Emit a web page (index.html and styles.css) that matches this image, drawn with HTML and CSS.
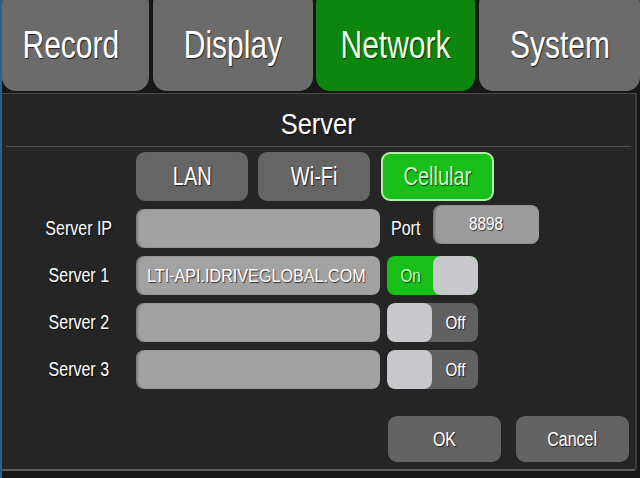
FILE: index.html
```html
<!DOCTYPE html>
<html lang="en">
<head>
  <meta charset="UTF-8" />
  <title>Network - Server</title>
  <link rel="stylesheet" href="styles.css">
</head>
<body>
  <div class="screen">
    <nav class="tabs">
      <div class="tab tab-record"><span class="c">Record</span></div>
      <div class="tab tab-display"><span class="c">Display</span></div>
      <div class="tab tab-network active"><span class="c">Network</span></div>
      <div class="tab tab-system"><span class="c">System</span></div>
    </nav>

    <section class="panel">
      <h1 class="title"><span class="c">Server</span></h1>

      <div class="modes">
        <button class="btn"><span class="c">LAN</span></button>
        <button class="btn"><span class="c">Wi-Fi</span></button>
        <button class="btn selected"><span class="c">Cellular</span></button>
      </div>

      <div class="row">
        <label class="label"><span class="c">Server IP</span></label>
        <div class="field"></div>
        <label class="port-label"><span class="c">Port</span></label>
        <div class="field port"><span class="c">8898</span></div>
      </div>

      <div class="row">
        <label class="label"><span class="c">Server 1</span></label>
        <div class="field"><span class="c">LTI-API.IDRIVEGLOBAL.COM</span></div>
        <div class="toggle on"><span class="state"><span class="c">On</span></span><span class="knob"></span></div>
      </div>

      <div class="row">
        <label class="label"><span class="c">Server 2</span></label>
        <div class="field"></div>
        <div class="toggle"><span class="knob"></span><span class="state"><span class="c">Off</span></span></div>
      </div>

      <div class="row">
        <label class="label"><span class="c">Server 3</span></label>
        <div class="field"></div>
        <div class="toggle"><span class="knob"></span><span class="state"><span class="c">Off</span></span></div>
      </div>

      <div class="actions">
        <button class="btn wide"><span class="c">OK</span></button>
        <button class="btn wide"><span class="c">Cancel</span></button>
      </div>
    </section>
  </div>
</body>
</html>
```

FILE: styles.css
```css
:root {
  --bg: #171717;
  --panel: #252525;
  --tab: #6b6b6b;
  --green: #0c860c;
  --bright: #18bf18;
  --field: #a2a2a2;
  --knob: #c8c8cc;
  --track: #616161;
}

body {
  margin: 0;
  background: var(--bg);
  font-family: 'Liberation Sans', Arial, sans-serif;
  color: #fff;
}

.screen {
  width: 638px;
  height: 478px;
  border-left: 2px solid #2b5f8e;
  overflow: hidden;
}

/* condensed text */
.c {
  display: inline-block;
  transform: scaleX(0.8);
  white-space: nowrap;
  text-shadow: 1px 1px 1px rgba(0, 0, 0, 0.7);
}

.tabs {
  display: flex;
  height: 101px;
  margin-top: -10px;
}

.tab {
  display: flex;
  align-items: center;
  justify-content: center;
  background: var(--tab);
  border-radius: 14px;
  font-size: 39px;
  padding-top: 8px;
  box-sizing: border-box;
}

.tab .c { transform: scaleX(0.77); }

.tab-record { width: 148px; padding-right: 10px; }
.tab-display { width: 161px; margin-left: 4px; }
.tab-network { width: 160px; margin-left: 3px; }
.tab-system { width: 162px; margin-left: 4px; }

.tab.active {
  background: var(--green);
  color: #eaffe4;
}

.panel {
  width: 635px;
  height: 378px;
  box-sizing: border-box;
  margin-top: 2px;
  background: var(--panel);
  border-top: 1px solid #4a4a4a;
  border-right: 2px solid #3c3c3c;
  border-bottom: 2px solid #5c5c5c;
  border-radius: 0 0 4px 0;
}

.title {
  margin: 0 4px 0 4px;
  height: 53px;
  box-sizing: border-box;
  padding-top: 15px;
  font-size: 30px;
  font-weight: normal;
  line-height: 30px;
  text-align: center;
  border-bottom: 1px solid #4f4f4f;
}

.title .c { transform: scaleX(0.85); }

.btn {
  font-family: inherit;
  color: #fff;
  border: none;
  background: #656565;
  border-radius: 9px;
  padding: 0;
  cursor: pointer;
}

.modes {
  display: flex;
  gap: 10px;
  margin: 5px 0 0 134px;
}

.modes .btn {
  width: 112px;
  height: 49px;
  font-size: 25px;
}

.modes .btn.selected {
  width: 113px;
  margin-left: 1px;
  background: var(--bright);
  border: 2px solid #b4ecae;
  color: #ccffc4;
}

.row {
  display: flex;
  align-items: center;
  height: 39px;
  margin-top: 8px;
}

.label {
  width: 110px;
  margin: 0 2px 0 22px;
  text-align: center;
  font-size: 20px;
}

.field {
  width: 244px;
  height: 39px;
  box-sizing: border-box;
  background: var(--field);
  border-radius: 8px;
  box-shadow: inset 2px 0 2px rgba(0, 0, 0, 0.25);
  display: flex;
  align-items: center;
  padding-left: 11px;
  font-size: 19px;
}

.field .c { transform-origin: left center; transform: scaleX(0.85); }

.port-label {
  width: 42px;
  margin-left: 11px;
  font-size: 20px;
}

.port-label .c { transform-origin: left center; }

.field.port {
  width: 106px;
  padding-left: 0;
  justify-content: center;
  margin-top: -8px;
  background: #9c9c9c;
  font-size: 18px;
}

.field.port .c { transform-origin: center; }

.toggle {
  display: flex;
  width: 91px;
  height: 39px;
  margin-left: 7px;
  border-radius: 8px;
  background: var(--track);
  overflow: hidden;
  font-size: 19px;
}

.toggle.on { background: var(--bright); color: #d0ffc8; }

.knob {
  width: 45px;
  background: var(--knob);
  border-radius: 8px;
}

.state {
  flex: 1;
  display: flex;
  align-items: center;
  justify-content: center;
}

.toggle.on .state { padding-left: 2px; }

.actions {
  display: flex;
  justify-content: flex-end;
  gap: 15px;
  margin: 27px 6px 0 0;
}

.actions .btn.wide {
  width: 113px;
  height: 46px;
  font-size: 20px;
  background: #636363;
}
```
